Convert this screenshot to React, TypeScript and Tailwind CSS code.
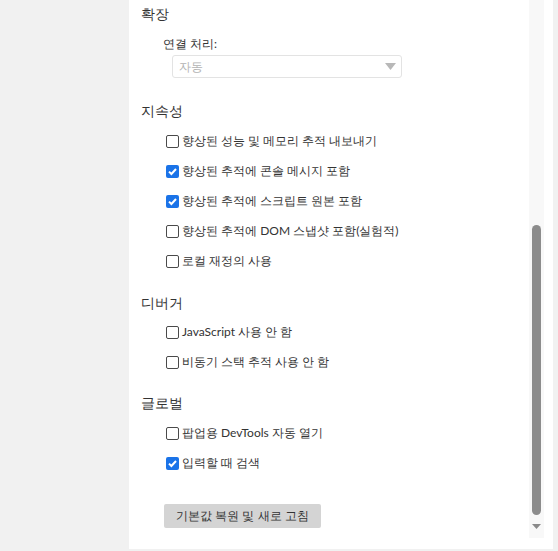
import React from "react";

const font = { fontFamily: '"Lato", sans-serif' };

function Row({ label, checked }: { label: string; checked?: boolean }) {
  return (
    <div className="flex h-[30px] items-center pl-[37px]">
      {checked ? (
        <span className="flex h-[13px] w-[13px] shrink-0 items-center justify-center rounded-[2px] bg-[#1a73e8]">
          <svg width="11" height="11" viewBox="0 0 11 11">
            <path d="M2 5.6 L4.4 8 L9 3" fill="none" stroke="#fff" strokeWidth="2" />
          </svg>
        </span>
      ) : (
        <span className="h-[13px] w-[13px] shrink-0 rounded-[2px] border border-[#4a4a4a] bg-white" />
      )}
      <span className="ml-[3px] whitespace-nowrap text-[12px] leading-[16px] text-[#333]">{label}</span>
    </div>
  );
}

function Heading({ children, className }: { children: React.ReactNode; className?: string }) {
  return (
    <div className={"flex h-[20px] items-center pl-[12px] text-[14px] text-[#333] " + (className ?? "")}>
      {children}
    </div>
  );
}

export default function App() {
  return (
    <div className="flex h-[551px] w-[558px] bg-[#f1f1f1]" style={font}>
      <div className="w-[129px] shrink-0" />
      <div className="flex h-[549px] w-[424px] shrink-0 bg-white">
        <div className="flex w-[400px] shrink-0 flex-col pt-[3px]">
          <Heading>확장</Heading>
          <div className="mt-[11px] flex h-[20px] items-center pl-[34px] text-[12px] text-[#333]">연결 처리:</div>
          <div className="ml-[43px] mt-[1px] flex h-[23px] w-[230px] items-center justify-between rounded-[3px] border border-[#e3e3e3] pl-[6px] pr-[5px]">
            <span className="text-[12px] text-[#b3b3b3]">자동</span>
            <svg width="11" height="7" viewBox="0 0 11 7">
              <path d="M0 0 H11 L5.5 7 Z" fill="#b8b8b8" />
            </svg>
          </div>
          <Heading className="mt-[22px]">지속성</Heading>
          <div className="mt-[6px] flex flex-col">
            <Row label="향상된 성능 및 메모리 추적 내보내기" />
            <Row label="향상된 추적에 콘솔 메시지 포함" checked />
            <Row label="향상된 추적에 스크립트 원본 포함" checked />
            <Row label="향상된 추적에 DOM 스냅샷 포함(실험적)" />
            <Row label="로컬 재정의 사용" />
          </div>
          <Heading className="mt-[16px]">디버거</Heading>
          <div className="mt-[5px] flex flex-col">
            <Row label="JavaScript 사용 안 함" />
            <Row label="비동기 스택 추적 사용 안 함" />
          </div>
          <Heading className="mt-[15px]">글로벌</Heading>
          <div className="mt-[6px] flex flex-col">
            <Row label="팝업용 DevTools 자동 열기" />
            <Row label="입력할 때 검색" checked />
          </div>
          <div className="ml-[35px] mt-[26px] flex h-[24px] w-[157px] items-center justify-center rounded-[2px] bg-[#d4d4d4] text-[12px] text-[#333]">
            기본값 복원 및 새로 고침
          </div>
        </div>
        <div className="flex h-[538px] w-[15px] shrink-0 flex-col items-center bg-[#f8f8f8]">
          <div className="mt-[225px] h-[290px] w-[9px] rounded-full bg-[#8c8c8c]" />
          <svg className="mt-[9px]" width="9" height="5" viewBox="0 0 9 5">
            <path d="M0 0 H9 L4.5 5 Z" fill="#8a8a8a" />
          </svg>
        </div>
      </div>
    </div>
  );
}
